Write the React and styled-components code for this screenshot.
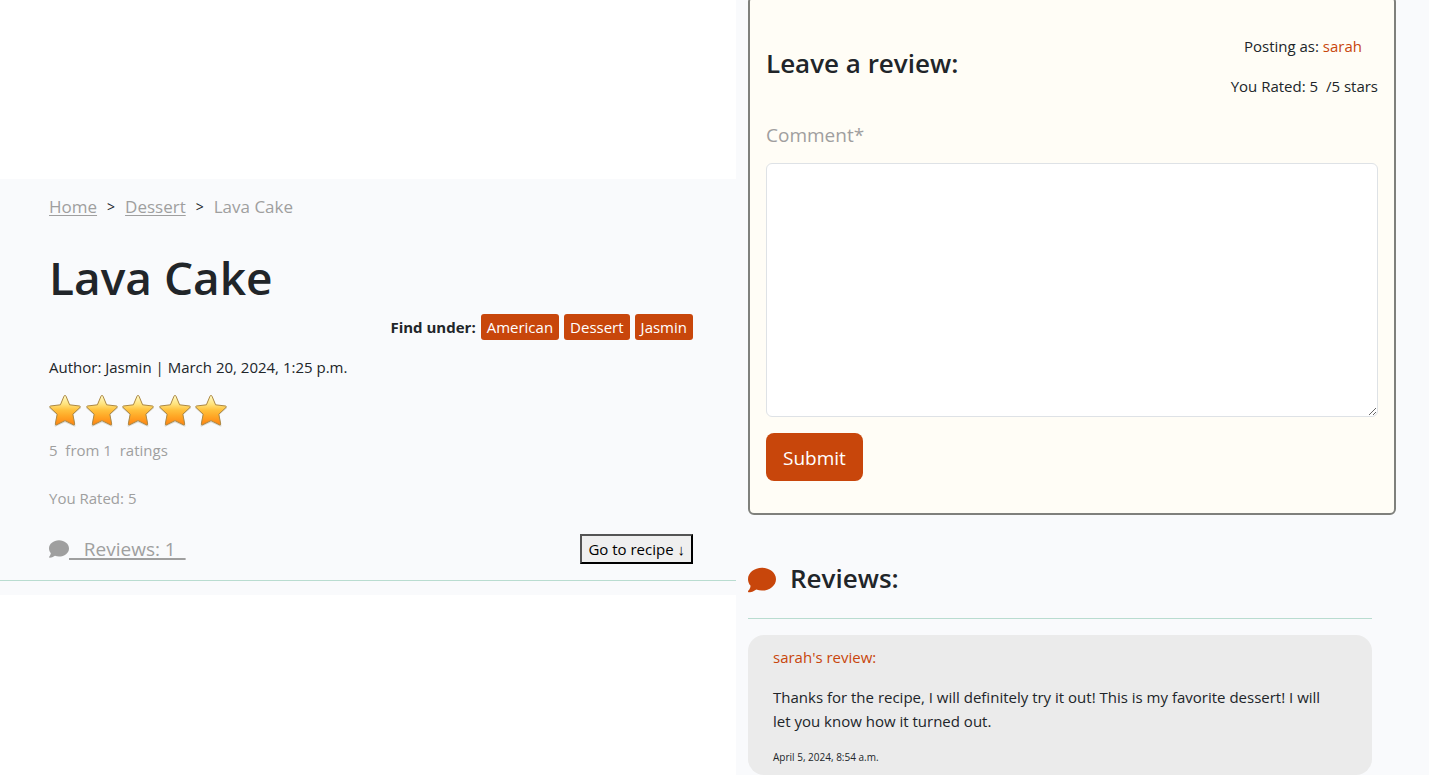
import React from "react";
import styled, { createGlobalStyle } from "styled-components";
import { FaComment } from "react-icons/fa6";

const color = {
  page: "#f9fafc",
  text: "#212529",
  muted: "#9f9f9f",
  accent: "#c8460b",
  rule: "#b9dcd0",
};

const GlobalStyle = createGlobalStyle`
  * { box-sizing: border-box; }
  body {
    margin: 0;
    background: ${color.page};
    color: ${color.text};
    font-family: "Open Sans", "Noto Sans", sans-serif;
    font-size: 15px;
    line-height: 24px;
  }
  h1, h2, p, ol { margin: 0; padding: 0; }
  button, textarea { font: inherit; }
`;

const Page = styled.div`
  display: grid;
  grid-template-columns: minmax(0, 736fr) minmax(0, 693fr);
  min-height: 100vh;
`;

const RecipeColumn = styled.section`
  display: flex;
  flex-direction: column;
  padding-top: 179px;
  background: #fff;
`;

const RecipeHeader = styled.header`
  padding-bottom: 14px;
  background: ${color.page};
`;

const RecipeBody = styled.div`
  padding: 14px 43px 16px 49px;
  border-bottom: 1px solid ${color.rule};
`;

const Breadcrumbs = styled.ol`
  display: flex;
  align-items: center;
  gap: 10px;
  list-style: none;
  font-size: 17px;
  line-height: 28px;
`;

const Crumb = styled.li`
  color: ${color.muted};
  a { color: inherit; text-underline-offset: 2px; }
`;

const Separator = styled.li`
  color: ${color.text};
  font-size: 14px;
`;

const Title = styled.h1`
  margin-top: 24px;
  font-size: 46px;
  font-weight: 600;
  line-height: 64px;
`;

const Tags = styled.div`
  display: flex;
  justify-content: flex-end;
  align-items: center;
  gap: 5px;
  margin-top: 5px;
`;

const TagLabel = styled.span`
  font-size: 15px;
  font-weight: 700;
`;

const Tag = styled.a`
  padding: 1px 6px;
  border-radius: 3px;
  background: ${color.accent};
  color: #fff;
  text-decoration: none;
`;

const Author = styled.p`
  margin-top: 15px;
`;

const Stars = styled.div`
  display: flex;
  justify-content: space-between;
  width: 178px;
  margin-top: 15px;
  svg { width: 32px; height: 34px; }
`;

const Rating = styled.p`
  margin-top: ${(p) => (p.$spaced ? "24px" : "10px")};
  color: ${color.muted};
  white-space: pre;
`;

const Actions = styled.div`
  display: flex;
  justify-content: space-between;
  align-items: center;
  margin-top: 24px;
`;

const ReviewsLink = styled.a`
  display: flex;
  align-items: center;
  color: ${color.muted};
  font-size: 19px;
  line-height: 28px;
  text-decoration: none;
  svg { width: 20px; height: 20px; }
  span {
    white-space: pre;
    text-decoration: underline 2px;
    text-underline-offset: 2px;
    text-decoration-skip-ink: none;
  }
`;

const RecipeButton = styled.button`
  padding: 1px 6px;
  border: 2px outset #000;
  background: #efefef;
  color: #000;
`;

const ReviewColumn = styled.section`
  overflow: hidden;
  padding: 0 33px 0 12px;
`;

const ReviewForm = styled.form`
  margin-top: -4px;
  padding: 36px 16px 32px;
  border: 2px solid #7f807c;
  border-radius: 6px;
  background: #fffdf6;
`;

const FormHead = styled.div`
  display: flex;
  justify-content: space-between;
  align-items: flex-start;
`;

const Heading = styled.h2`
  font-size: 26px;
  font-weight: 600;
  line-height: 34px;
`;

const FormHeading = styled(Heading)`
  margin-top: 12px;
`;

const Posting = styled.div`
  text-align: right;
  p { white-space: pre; }
  p + p { margin-top: 16px; }
`;

const PostingAs = styled.p`
  padding-right: 16px;
`;

const Accent = styled.span`
  color: ${color.accent};
`;

const CommentLabel = styled.label`
  display: block;
  margin-top: 22px;
  color: ${color.muted};
  font-size: 19px;
  line-height: 30px;
`;

const CommentBox = styled.textarea`
  display: block;
  width: 100%;
  height: 254px;
  margin-top: 13px;
  padding: 6px 12px;
  border: 1px solid #dee2e6;
  border-radius: 6px;
  background: #fff;
`;

const Submit = styled.button`
  display: block;
  margin-top: 16px;
  padding: 10px 17px 8px;
  border: 0;
  border-radius: 8px;
  background: ${color.accent};
  color: #fff;
  font-size: 19px;
  line-height: 30px;
`;

const ReviewList = styled.div`
  padding: 46px 24px 0 0;
`;

const ListHead = styled.div`
  display: flex;
  align-items: center;
  gap: 14px;
  padding-bottom: 23px;
  border-bottom: 1px solid ${color.rule};
  svg { width: 28px; height: 28px; margin-top: 4px; color: ${color.accent}; }
`;

const ReviewCard = styled.article`
  margin-top: 16px;
  padding: 10px 40px 10px 25px;
  border-radius: 16px;
  background: #ebebeb;
  p + p { margin-top: 16px; }
`;

const DateLine = styled.p`
  font-size: 10px;
  line-height: 16px;
`;

function Star() {
  return (
    <svg viewBox="0 0 32 34" aria-hidden="true">
      <defs>
        <linearGradient id="star-fill" x1="0" y1="0" x2="0" y2="1">
          <stop offset="0" stopColor="#fffbc8" />
          <stop offset="0.3" stopColor="#ffe27a" />
          <stop offset="0.5" stopColor="#ffc03c" />
          <stop offset="0.7" stopColor="#ffa826" />
          <stop offset="1" stopColor="#ff8412" />
        </linearGradient>
      </defs>
      <path
        d="M16 2.5 20.4 12 31.3 13.6 23.5 20.5 25.6 31.8 16 27.4 6.4 31.8 8.5 20.5 .8 13.6 11.6 12Z"
        fill="none" stroke="#b9b7ae" strokeWidth="1.6" strokeLinejoin="round" opacity=".5"
      />
      <path
        d="M16 1.4 Q16.7 1.4 17 2.2 L20.6 10.8 30.6 12 Q31.8 12.4 31 13.4 L23.8 20.2 25.7 30 Q25.7 31.2 24.6 30.9 L16 26.6 7.4 30.9 Q6.3 31.2 6.3 30 L8.2 20.2 1 13.4 Q.2 12.4 1.4 12 L11.4 10.8 15 2.2 Q15.3 1.4 16 1.4Z"
        fill="url(#star-fill)" stroke="#ad8843" strokeWidth="1" strokeLinejoin="round"
      />
    </svg>
  );
}

export default function App() {
  return (
    <>
      <GlobalStyle />
      <Page>
        <RecipeColumn>
          <RecipeHeader>
            <RecipeBody>
              <nav aria-label="Breadcrumb">
                <Breadcrumbs>
                  <Crumb><a href="#home">Home</a></Crumb>
                  <Separator>&gt;</Separator>
                  <Crumb><a href="#dessert">Dessert</a></Crumb>
                  <Separator>&gt;</Separator>
                  <Crumb aria-current="page">Lava Cake</Crumb>
                </Breadcrumbs>
              </nav>
              <Title>Lava Cake</Title>
              <Tags>
                <TagLabel>Find under:</TagLabel>
                {["American", "Dessert", "Jasmin"].map((t) => (
                  <Tag key={t} href={`#${t.toLowerCase()}`}>{t}</Tag>
                ))}
              </Tags>
              <Author>Author: Jasmin | March 20, 2024, 1:25 p.m.</Author>
              <Stars role="img" aria-label="5 out of 5 stars">
                {[1, 2, 3, 4, 5].map((n) => <Star key={n} />)}
              </Stars>
              <Rating>{"5  from 1  ratings"}</Rating>
              <Rating $spaced>You Rated: 5</Rating>
              <Actions>
                <ReviewsLink href="#reviews">
                  <FaComment aria-hidden="true" />
                  <span>{"\u00a0\u00a0\u00a0Reviews: 1\u00a0\u00a0"}</span>
                </ReviewsLink>
                <RecipeButton type="button">Go to recipe ↓</RecipeButton>
              </Actions>
            </RecipeBody>
          </RecipeHeader>
        </RecipeColumn>
        <ReviewColumn>
          <ReviewForm onSubmit={(e) => e.preventDefault()}>
            <FormHead>
              <FormHeading>Leave a review:</FormHeading>
              <Posting>
                <PostingAs>Posting as: <Accent>sarah</Accent></PostingAs>
                <p>{"You Rated: 5  /5 stars"}</p>
              </Posting>
            </FormHead>
            <CommentLabel htmlFor="comment">Comment*</CommentLabel>
            <CommentBox id="comment" required />
            <Submit type="submit">Submit</Submit>
          </ReviewForm>
          <ReviewList id="reviews">
            <ListHead>
              <FaComment aria-hidden="true" />
              <Heading>Reviews:</Heading>
            </ListHead>
            <ReviewCard>
              <p><Accent>sarah's review:</Accent></p>
              <p>
                Thanks for the recipe, I will definitely try it out! This is my
                favorite dessert! I will let you know how it turned out.
              </p>
              <DateLine>April 5, 2024, 8:54 a.m.</DateLine>
            </ReviewCard>
          </ReviewList>
        </ReviewColumn>
      </Page>
    </>
  );
}
